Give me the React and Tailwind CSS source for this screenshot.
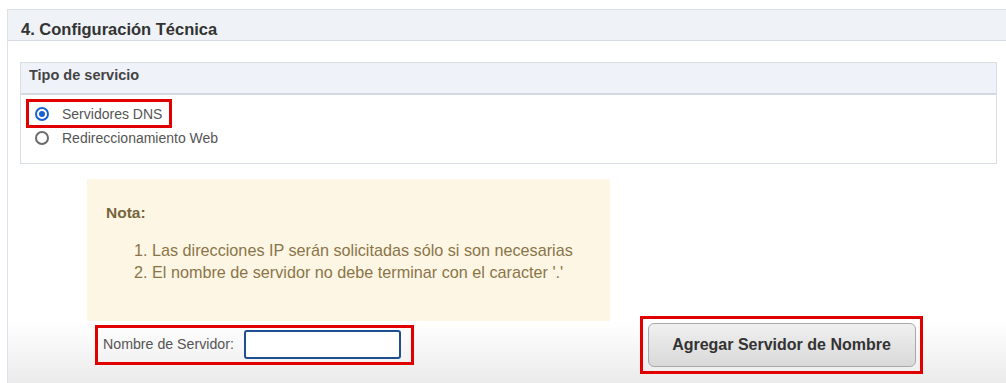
import React, { useState } from 'react';

const Radio = ({ checked, label, onChange }) => (
  <label className="flex items-center gap-[13px] cursor-pointer" onClick={onChange}>
    <span
      className={`flex items-center justify-center w-[14px] h-[14px] rounded-full border-2 ${
        checked ? 'border-[#1a5fd0]' : 'border-[#6b6b6b]'
      } bg-white`}
    >
      {checked && <span className="w-[6px] h-[6px] rounded-full bg-[#1a5fd0]" />}
    </span>
    <span className="text-[14px] leading-[20px] text-[#555]">{label}</span>
  </label>
);

const App = () => {
  const [service, setService] = useState('dns');
  const [serverName, setServerName] = useState('');

  return (
    <div
      className="w-[1006px] h-[383px] overflow-hidden bg-white pt-[9px] pl-[7px]"
      style={{ fontFamily: '"Liberation Sans", Arial, sans-serif' }}
    >
      <div className="h-full border-l border-t border-[#dce1e9] flex flex-col">
        {/* Section header */}
        <div className="h-[31px] shrink-0 flex items-center px-[13px] pt-[8px] bg-[#eff2f7] border-b border-[#d5dae3]">
          <h2 className="text-[16.5px] font-bold text-[#333]">4. Configuración Técnica</h2>
        </div>

        <div className="flex-1 flex flex-col pt-[21px]">
          {/* Tipo de servicio */}
          <div className="shrink-0 ml-[12px] mr-[9px] border border-[#d9dde4]">
            <div className="h-[32px] flex items-center pl-[8px] pb-[4px] bg-[#eff2f8] border-b-2 border-[#d3d9e3]">
              <span className="text-[14.5px] font-bold text-[#444]">Tipo de servicio</span>
            </div>
            <div className="h-[68px] pt-[4px] pl-[5px] flex flex-col">
              <div className="w-[146px] h-[29px] border-[3px] border-[#e00000] flex items-center pl-[6px]">
                <Radio checked={service === 'dns'} label="Servidores DNS" onChange={() => setService('dns')} />
              </div>
              <div className="pl-[9px]">
                <Radio checked={service === 'web'} label="Redireccionamiento Web" onChange={() => setService('web')} />
              </div>
            </div>
          </div>

          {/* Nota */}
          <div className="mt-[15px] ml-[79px] w-[523px] h-[142px] shrink-0 bg-[#fdf6e4] pl-[19px] pt-[22px]">
            <p className="text-[15.5px] font-bold text-[#76653c]">Nota:</p>
            <ol className="mt-[15px] pl-[28px] text-[16.2px] leading-[22px] text-[#8a7549]">
              <li>1. Las direcciones IP serán solicitadas sólo si son necesarias</li>
              <li>2. El nombre de servidor no debe terminar con el caracter '.'</li>
            </ol>
          </div>

          {/* Bottom row */}
          <div className="h-[62px] shrink-0 flex items-center bg-gradient-to-b from-white to-[#ebebeb] pl-[87px] pb-[15px]">
            <div className="w-[319px] h-[40px] border-[3px] border-[#e00000] flex items-center pl-[5px]">
              <span className="w-[141px] shrink-0 text-[14.2px] text-[#555]">Nombre de Servidor:</span>
              <input
                value={serverName}
                onChange={(e) => setServerName(e.target.value)}
                className="w-[157px] h-[29px] rounded-[3px] border-2 border-[#1f4f91] bg-white outline-none px-1 text-[13px]"
              />
            </div>
            <div className="ml-[226px] w-[283px] h-[58px] shrink-0 border-[3px] border-[#e00000] flex items-center justify-center">
              <button className="w-[268px] h-[44px] rounded-[6px] border border-[#a9a9a9] bg-gradient-to-b from-[#f0f0f0] to-[#d9d9d9] text-[16px] font-bold text-[#333]">
                Agregar Servidor de Nombre
              </button>
            </div>
          </div>
        </div>
      </div>
    </div>
  );
};

export default App;
